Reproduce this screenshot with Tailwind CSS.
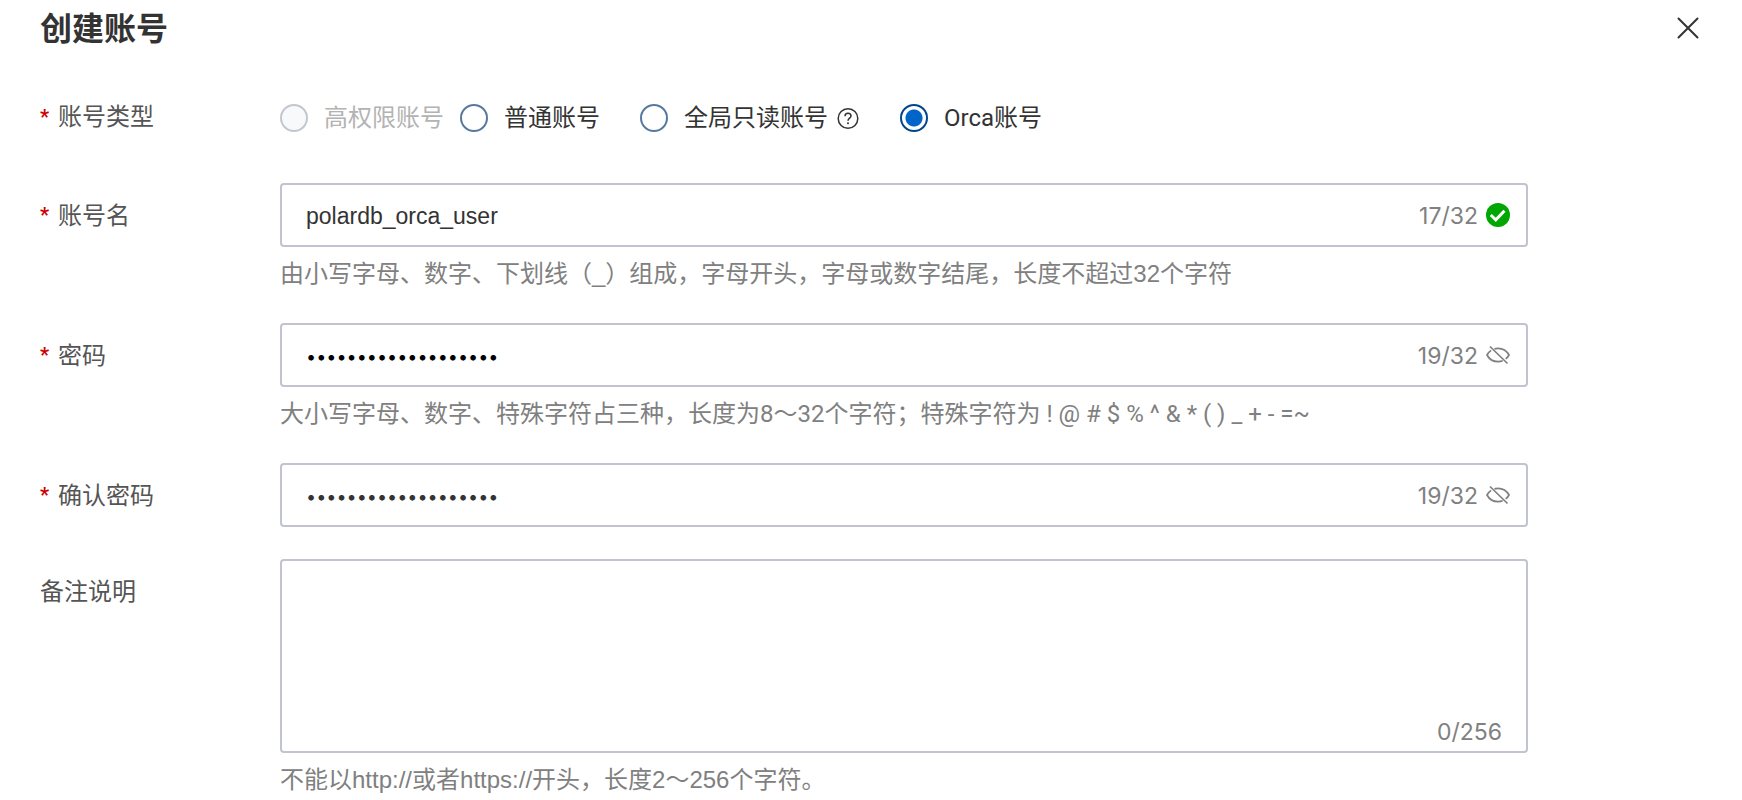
<!DOCTYPE html>
<html lang="zh-CN">
<head>
    <meta charset="UTF-8">
    <meta name="viewport" content="width=device-width, initial-scale=1.0">
    <title>创建账号</title>
    <script src="https://cdn.jsdelivr.net/npm/@tailwindcss/browser@4"></script>
</head>
<body class="bg-white font-[Roboto,'Noto_Sans_CJK_SC',sans-serif] text-[24px] text-[#333]">

<main class="pl-10 pr-10">
    <!-- Header -->
    <header class="flex h-14 items-center justify-between">
        <h1 class="pt-[2px] text-[32px] leading-14 font-bold">创建账号</h1>
        <button type="button" aria-label="关闭" class="flex size-7 items-center justify-center">
            <svg class="size-7" viewBox="0 0 28 28" fill="none" stroke="#333" stroke-width="2" stroke-linecap="round">
                <path d="M4.5 4.5l19 19M23.5 4.5l-19 19"/>
            </svg>
        </button>
    </header>

    <form class="mt-[31px] flex max-w-[1488px] flex-col gap-8">
        <!-- Account type -->
        <div class="flex h-16" role="radiogroup" aria-labelledby="type-label">
            <div id="type-label" class="flex w-60 shrink-0 leading-15 text-[#555]">
                <span class="w-[18px] text-[20px] font-bold text-[#c00]">*</span>账号类型
            </div>
            <div class="flex h-[62px] items-center whitespace-nowrap">
                <label class="mr-4 flex items-center gap-4 text-[#b3b3b3]">
                    <input type="radio" name="type" disabled class="size-7 appearance-none rounded-full border-2 border-[#c1c7d0] bg-[#f7f9fa]">高权限账号
                </label>
                <label class="mr-10 flex items-center gap-4">
                    <input type="radio" name="type" class="size-7 appearance-none rounded-full border-2 border-[#57799f]">普通账号
                </label>
                <label class="flex items-center gap-4">
                    <input type="radio" name="type" class="size-7 appearance-none rounded-full border-2 border-[#57799f]">全局只读账号
                </label>
                <svg class="mr-10 ml-2 size-6" viewBox="0 0 24 24" fill="none" stroke="#333" stroke-width="1.5">
                    <circle cx="12" cy="12.5" r="9.8"/>
                    <path d="M9 10.2c0-1.8 1.2-3 3-3s3 1.1 3 2.8c0 2-3 2.2-3 4.8"/>
                    <circle cx="12" cy="17.3" r="1" fill="#333" stroke="none"/>
                </svg>
                <label class="flex items-center gap-4">
                    <input type="radio" name="type" checked class="size-7 appearance-none rounded-full border-2 border-[#00468c] bg-[radial-gradient(circle,#0064c8_8px,#fff_9px)]">Orca账号
                </label>
            </div>
        </div>

        <!-- Account name -->
        <div class="flex">
            <label for="name" class="flex h-16 w-60 shrink-0 leading-[66px] text-[#555]">
                <span class="w-[18px] text-[20px] leading-16 font-bold text-[#c00]">*</span>账号名
            </label>
            <div class="min-w-0 flex-1">
                <div class="flex h-16 items-center gap-2 rounded-sm border-2 border-[#c1c4d0] pr-4 pl-6">
                    <input id="name" type="text" value="polardb_orca_user" class="min-w-0 flex-1 pt-[2px] font-['Liberation_Sans',sans-serif] text-[23px] outline-none">
                    <span class="pt-[2px] font-[Inter,sans-serif] text-[23px] text-[#808080]">17/32</span>
                    <svg class="size-6" viewBox="0 0 24 24" fill="none">
                        <circle cx="12" cy="12" r="12" fill="#00a700"/>
                        <path d="M4.8 12l5 4.8 8.7-9" stroke="#fff" stroke-width="3"/>
                    </svg>
                </div>
                <p class="mt-2 h-9 font-['Liberation_Sans','Noto_Sans_CJK_SC',sans-serif] leading-[38px] text-[#808080]">由小写字母、数字、下划线（_）组成，字母开头，字母或数字结尾，长度不超过32个字符</p>
            </div>
        </div>

        <!-- Password -->
        <div class="flex">
            <label for="password" class="flex h-16 w-60 shrink-0 leading-[66px] text-[#555]">
                <span class="w-[18px] text-[20px] leading-16 font-bold text-[#c00]">*</span>密码
            </label>
            <div class="min-w-0 flex-1">
                <div class="flex h-16 items-center gap-2 rounded-sm border-2 border-[#c1c4d0] pr-4 pl-6">
                    <input id="password" type="password" value="Polardb_Orca_2024!#" class="min-w-0 flex-1 pt-[2px] font-[Inter,sans-serif] text-[18px] text-black outline-none">
                    <span class="pt-[2px] font-[Inter,sans-serif] text-[23px] text-[#808080]">19/32</span>
                    <button type="button" aria-label="显示密码">
                        <svg class="size-6" viewBox="0 0 24 24" fill="none" stroke="#808080" stroke-width="1.7">
                            <path d="M8.5 5.9C9.6 5.5 10.8 5.3 12 5.3c5 0 9 3 11 6.7-.8 1.5-1.9 2.8-3.3 3.9M5.1 7.4C3.3 8.6 1.9 10.2 1 12c2 3.7 6 6.7 11 6.7 1.7 0 3.3-.3 4.7-.9M4 3.5l17.5 17"/>
                        </svg>
                    </button>
                </div>
                <p class="mt-2 h-9 leading-[38px] text-[#808080]">大小写字母、数字、特殊字符占三种，长度为8～32个字符；特殊字符为 ! @ # $ % ^ &amp; * ( ) _ + - =~</p>
            </div>
        </div>

        <!-- Confirm password -->
        <div class="flex">
            <label for="confirm" class="flex h-16 w-60 shrink-0 leading-[66px] text-[#555]">
                <span class="w-[18px] text-[20px] leading-16 font-bold text-[#c00]">*</span>确认密码
            </label>
            <div class="flex h-16 min-w-0 flex-1 items-center gap-2 rounded-sm border-2 border-[#c1c4d0] pr-4 pl-6">
                <input id="confirm" type="password" value="Polardb_Orca_2024!#" class="min-w-0 flex-1 pt-[2px] font-[Inter,sans-serif] text-[18px] outline-none">
                <span class="pt-[2px] font-[Inter,sans-serif] text-[23px] text-[#808080]">19/32</span>
                <button type="button" aria-label="显示密码">
                    <svg class="size-6" viewBox="0 0 24 24" fill="none" stroke="#808080" stroke-width="1.7">
                        <path d="M8.5 5.9C9.6 5.5 10.8 5.3 12 5.3c5 0 9 3 11 6.7-.8 1.5-1.9 2.8-3.3 3.9M5.1 7.4C3.3 8.6 1.9 10.2 1 12c2 3.7 6 6.7 11 6.7 1.7 0 3.3-.3 4.7-.9M4 3.5l17.5 17"/>
                    </svg>
                </button>
            </div>
        </div>

        <!-- Remarks -->
        <div class="flex">
            <label for="remark" class="h-16 w-60 shrink-0 leading-[66px] text-[#555]">备注说明</label>
            <div class="min-w-0 flex-1">
                <div class="rounded-sm border-2 border-[#c1c4d0]">
                    <textarea id="remark" class="block h-[150px] w-full resize-none px-6 py-4 outline-none"></textarea>
                    <div class="h-10 pr-6 text-right font-[Inter,sans-serif] text-[23px] leading-[42px] text-[#808080]">0/256</div>
                </div>
                <p class="mt-2 h-9 font-['Liberation_Sans','Noto_Sans_CJK_SC',sans-serif] leading-[38px] text-[#808080]">不能以http://或者https://开头，长度2～256个字符。</p>
            </div>
        </div>
    </form>
</main>

</body>
</html>
